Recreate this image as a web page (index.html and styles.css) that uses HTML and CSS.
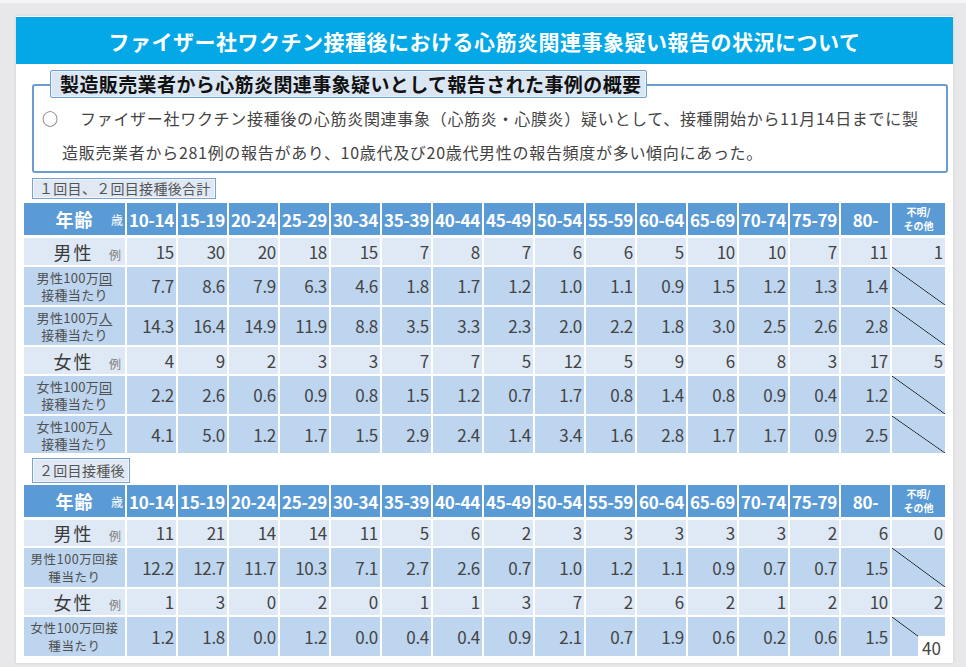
FILE: index.html
```html
<!DOCTYPE html>
<html lang="ja">
<head>
<meta charset="utf-8">
<title>ファイザー社ワクチン接種後における心筋炎関連事象疑い報告の状況について</title>
<link rel="stylesheet" href="styles.css">
</head>
<body>
<div class="slide">
  <h1 class="title">ファイザー社ワクチン接種後における心筋炎関連事象疑い報告の状況について</h1>

  <section class="summary">
    <h2 class="summary-tag">製造販売業者から心筋炎関連事象疑いとして報告された事例の概要</h2>
    <div class="summary-box">
      <p class="summary-text"><span class="bullet">○</span>ファイザー社ワクチン接種後の心筋炎関連事象（心筋炎・心膜炎）疑いとして、接種開始から11月14日までに製<br>造販売業者から281例の報告があり、10歳代及び20歳代男性の報告頻度が多い傾向にあった。</p>
    </div>
  </section>

  <div class="label label-1">１回目、２回目接種後合計</div>
  <table class="data">
    <colgroup>
      <col class="c-head"><col class="c-age"><col class="c-age"><col class="c-age"><col class="c-age"><col class="c-age"><col class="c-age"><col class="c-age"><col class="c-age"><col class="c-age"><col class="c-age"><col class="c-age"><col class="c-age"><col class="c-age"><col class="c-age"><col class="c-age"><col class="c-last">
    </colgroup>
    <thead>
      <tr class="r-head">
        <th><div class="rh"><span class="rh-main hd">年齢</span><span class="rh-unit hd-unit">歳</span></div></th>
        <th>10-14</th><th>15-19</th><th>20-24</th><th>25-29</th><th>30-34</th><th>35-39</th><th>40-44</th><th>45-49</th><th>50-54</th><th>55-59</th><th>60-64</th><th>65-69</th><th>70-74</th><th>75-79</th><th>80-</th>
        <th class="other">不明/<br>その他</th>
      </tr>
    </thead>
    <tbody>
      <tr class="r-n">
        <td><div class="rh"><span class="rh-main">男性</span><span class="rh-unit">例</span></div></td>
        <td>15</td><td>30</td><td>20</td><td>18</td><td>15</td><td>7</td><td>8</td><td>7</td><td>6</td><td>6</td><td>5</td><td>10</td><td>10</td><td>7</td><td>11</td><td>1</td>
      </tr>
      <tr class="r-rate">
        <td class="rl">男性100万<u>回</u><br>接種当たり</td>
        <td>7.7</td><td>8.6</td><td>7.9</td><td>6.3</td><td>4.6</td><td>1.8</td><td>1.7</td><td>1.2</td><td>1.0</td><td>1.1</td><td>0.9</td><td>1.5</td><td>1.2</td><td>1.3</td><td>1.4</td><td class="diag"></td>
      </tr>
      <tr class="r-rate">
        <td class="rl">男性100万<u>人</u><br>接種当たり</td>
        <td>14.3</td><td>16.4</td><td>14.9</td><td>11.9</td><td>8.8</td><td>3.5</td><td>3.3</td><td>2.3</td><td>2.0</td><td>2.2</td><td>1.8</td><td>3.0</td><td>2.5</td><td>2.6</td><td>2.8</td><td class="diag"></td>
      </tr>
      <tr class="r-n">
        <td><div class="rh"><span class="rh-main">女性</span><span class="rh-unit">例</span></div></td>
        <td>4</td><td>9</td><td>2</td><td>3</td><td>3</td><td>7</td><td>7</td><td>5</td><td>12</td><td>5</td><td>9</td><td>6</td><td>8</td><td>3</td><td>17</td><td>5</td>
      </tr>
      <tr class="r-rate">
        <td class="rl">女性100万<u>回</u><br>接種当たり</td>
        <td>2.2</td><td>2.6</td><td>0.6</td><td>0.9</td><td>0.8</td><td>1.5</td><td>1.2</td><td>0.7</td><td>1.7</td><td>0.8</td><td>1.4</td><td>0.8</td><td>0.9</td><td>0.4</td><td>1.2</td><td class="diag"></td>
      </tr>
      <tr class="r-rate r-last">
        <td class="rl">女性100万<u>人</u><br>接種当たり</td>
        <td>4.1</td><td>5.0</td><td>1.2</td><td>1.7</td><td>1.5</td><td>2.9</td><td>2.4</td><td>1.4</td><td>3.4</td><td>1.6</td><td>2.8</td><td>1.7</td><td>1.7</td><td>0.9</td><td>2.5</td><td class="diag"></td>
      </tr>
    </tbody>
  </table>

  <div class="label label-2">２回目接種後</div>
  <table class="data data-2">
    <colgroup>
      <col class="c-head"><col class="c-age"><col class="c-age"><col class="c-age"><col class="c-age"><col class="c-age"><col class="c-age"><col class="c-age"><col class="c-age"><col class="c-age"><col class="c-age"><col class="c-age"><col class="c-age"><col class="c-age"><col class="c-age"><col class="c-age"><col class="c-last">
    </colgroup>
    <thead>
      <tr class="r-head">
        <th><div class="rh"><span class="rh-main hd">年齢</span><span class="rh-unit hd-unit">歳</span></div></th>
        <th>10-14</th><th>15-19</th><th>20-24</th><th>25-29</th><th>30-34</th><th>35-39</th><th>40-44</th><th>45-49</th><th>50-54</th><th>55-59</th><th>60-64</th><th>65-69</th><th>70-74</th><th>75-79</th><th>80-</th>
        <th class="other">不明/<br>その他</th>
      </tr>
    </thead>
    <tbody>
      <tr class="r-n r-n2">
        <td><div class="rh"><span class="rh-main">男性</span><span class="rh-unit">例</span></div></td>
        <td>11</td><td>21</td><td>14</td><td>14</td><td>11</td><td>5</td><td>6</td><td>2</td><td>3</td><td>3</td><td>3</td><td>3</td><td>3</td><td>2</td><td>6</td><td>0</td>
      </tr>
      <tr class="r-rate r-rate2">
        <td class="rl rl-tight"><span class="ln">男性100万回接</span><span class="ln">種当たり</span></td>
        <td>12.2</td><td>12.7</td><td>11.7</td><td>10.3</td><td>7.1</td><td>2.7</td><td>2.6</td><td>0.7</td><td>1.0</td><td>1.2</td><td>1.1</td><td>0.9</td><td>0.7</td><td>0.7</td><td>1.5</td><td class="diag"></td>
      </tr>
      <tr class="r-n r-n2">
        <td><div class="rh"><span class="rh-main">女性</span><span class="rh-unit">例</span></div></td>
        <td>1</td><td>3</td><td>0</td><td>2</td><td>0</td><td>1</td><td>1</td><td>3</td><td>7</td><td>2</td><td>6</td><td>2</td><td>1</td><td>2</td><td>10</td><td>2</td>
      </tr>
      <tr class="r-rate r-rate2">
        <td class="rl rl-tight"><span class="ln">女性100万回接</span><span class="ln">種当たり</span></td>
        <td>1.2</td><td>1.8</td><td>0.0</td><td>1.2</td><td>0.0</td><td>0.4</td><td>0.4</td><td>0.9</td><td>2.1</td><td>0.7</td><td>1.9</td><td>0.6</td><td>0.2</td><td>0.6</td><td>1.5</td><td class="diag"></td>
      </tr>
    </tbody>
  </table>

  <div class="page-no">40</div>
</div>
</body>
</html>
```

FILE: styles.css
```css
* { box-sizing: border-box; }

html, body { margin: 0; padding: 0; }

body {
  width: 966px;
  height: 667px;
  overflow: hidden;
  background: #e8e8ea;
  border-top: 3px solid #f5f5f6;
  font-family: "Noto Sans CJK JP", "Noto Sans", sans-serif;
  color: #333;
}

.slide {
  position: relative;
  margin: 13px 0 0 16px;
  width: 937px;
  height: 647px;
  padding-top: 1px;
  background: #fff;
  box-shadow: 0 0 3px rgba(0, 0, 0, 0.12);
}

.title {
  margin: 0;
  height: 47px;
  display: flex;
  align-items: center;
  justify-content: center;
  background: #04a8e6;
  color: #fff;
  font-size: 21px;
  font-weight: 700;
  letter-spacing: 0.5px;
}

/* summary */
.summary {
  margin: 6px 0 0 16px;
  width: 916px;
}

.summary-tag {
  position: relative;
  z-index: 1;
  width: fit-content;
  height: 28px;
  margin: 0 0 0 18px;
  padding: 0 5px 0 9px;
  background: #dbe6f3;
  border: 1px solid #6f9fd3;
  box-shadow: inset 0 0 0 1px #eaf1f9;
  border-radius: 2px;
  color: #111;
  font-size: 19px;
  font-weight: 700;
  line-height: 26px;
  letter-spacing: 0.4px;
}

.summary-box {
  margin-top: -14px;
  height: 89px;
  border: 2px solid #6a9cd0;
  border-radius: 3px;
  padding: 15px 0 0 28px;
}

.summary-text {
  margin: 0;
  font-size: 16px;
  line-height: 34px;
  letter-spacing: 0.7px;
  color: #444;
  text-indent: -20px;
  white-space: nowrap;
}

.bullet {
  display: inline-block;
  width: 38px;
  text-indent: 0;
  letter-spacing: 0;
}

/* labels */
.label {
  width: fit-content;
  margin-left: 16px;
  padding: 0 4px 0 6px;
  background: #dfe8f3;
  border: 1px solid #7ca3cf;
  box-shadow: inset 0 0 0 1px #f0f5fb;
  color: #555;
  font-size: 14px;
  letter-spacing: 0.3px;
}

.label-1 {
  margin-top: 5px;
  height: 21px;
  line-height: 19px;
}

.label-2 {
  margin-top: 3px;
  height: 25px;
  line-height: 23px;
}

/* tables */
.data {
  margin: 4px 0 0 8px;
  width: 921px;
  table-layout: fixed;
  border-collapse: separate;
  border-spacing: 0;
}

.data-2 { margin-top: 2px; }

.c-head { width: 103px; }
.c-age { width: 51px; }
.c-last { width: 53px; }

.data th,
.data td {
  padding: 0;
  border-right: 2px solid #fff;
  border-bottom: 2px solid #fff;
  vertical-align: middle;
}

.data th:last-child,
.data td:last-child { border-right: 0; }

.data thead th {
  background: #5b9bd5;
  border-bottom-width: 3px;
  color: #fff;
  font-size: 17px;
  font-weight: 700;
  letter-spacing: -0.3px;
  text-align: center;
  white-space: nowrap;
}

.data thead th.other {
  font-size: 10px;
  line-height: 14px;
  letter-spacing: 0;
}

.r-head { height: 35px; }
.r-n { height: 29px; }
.r-n2 { height: 28px; }
.r-rate { height: 40px; }
.r-rate2 { height: 41px; }
.r-last { height: 39px; }

.r-n td { background: #dee9f5; }
.r-rate td { background: #bdd5ee; }

.data tbody td {
  text-align: right;
  padding-right: 2px;
  font-size: 17px;
  line-height: 20px;
  letter-spacing: -0.3px;
  color: #444;
}

/* row heads */
.rh {
  display: flex;
  align-items: center;
  padding-left: 14px;
}

.rh-main {
  flex: 1;
  text-align: center;
  font-size: 18px;
  letter-spacing: 2px;
  line-height: 22px;
  color: #3a3a3a;
}

.rh-unit {
  width: 14px;
  align-self: flex-end;
  font-size: 12px;
  line-height: 16px;
  color: #808080;
  text-align: left;
}

.rh-main.hd {
  color: #fff;
  font-weight: 700;
  letter-spacing: 1px;
}

.rh-unit.hd-unit {
  color: #fff;
  font-weight: 400;
  margin-bottom: 2px;
}

.data tbody td.rl {
  text-align: center;
  padding: 0;
  font-size: 13px;
  line-height: 17px;
  letter-spacing: 0.3px;
  color: #505050;
}

.data tbody td.rl-tight {
  font-size: 12.5px;
  line-height: 18px;
  letter-spacing: 0.6px;
}

.ln {
  display: block;
  height: 18px;
}

.rl u {
  text-decoration-thickness: 1px;
  text-underline-offset: 2px;
}

.data tbody td.diag {
  background: linear-gradient(to top right, #bdd5ee calc(50% - 0.7px), #1e1e1e 50%, #bdd5ee calc(50% + 0.7px));
}

.page-no {
  position: absolute;
  right: 8px;
  bottom: 3px;
  width: 27px;
  height: 24px;
  background: #fff;
  color: #444;
  font-size: 17px;
  line-height: 24px;
  text-align: center;
}
```
